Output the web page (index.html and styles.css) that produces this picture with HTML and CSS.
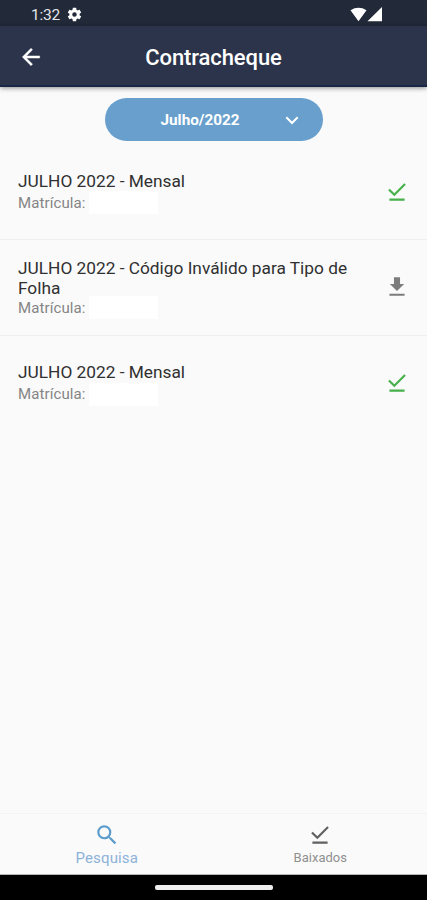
FILE: index.html
```html
<!DOCTYPE html>
<html lang="pt-BR">
<head>
    <meta charset="UTF-8">
    <meta name="viewport" content="width=device-width, initial-scale=1.0">
    <title>Contracheque</title>
    <link rel="stylesheet" href="styles.css">
</head>
<body>
    <div class="status-bar">
        <span class="clock">1:32</span>
        <svg class="gear" viewBox="0 0 24 24"><path fill-rule="evenodd" d="M19.14 12.94c.04-.3.06-.61.06-.94 0-.32-.02-.64-.07-.94l2.03-1.58c.18-.14.23-.41.12-.61l-1.92-3.32c-.12-.22-.37-.29-.59-.22l-2.39.96c-.5-.38-1.03-.7-1.62-.94l-.36-2.54c-.04-.24-.24-.41-.48-.41h-3.84c-.24 0-.43.17-.47.41l-.36 2.54c-.59.24-1.13.57-1.62.94l-2.39-.96c-.22-.08-.47 0-.59.22L2.74 8.87c-.12.21-.08.47.12.61l2.03 1.58c-.05.3-.09.63-.09.94s.02.64.07.94l-2.03 1.58c-.18.14-.23.41-.12.61l1.92 3.32c.12.22.37.29.59.22l2.39-.96c.5.38 1.03.7 1.62.94l.36 2.54c.05.24.24.41.48.41h3.84c.24 0 .44-.17.47-.41l.36-2.54c.59-.24 1.13-.56 1.62-.94l2.39.96c.22.08.47 0 .59-.22l1.92-3.32c.12-.22.07-.47-.12-.61l-2.01-1.58zM12 15.2a3.2 3.2 0 1 1 0-6.4 3.2 3.2 0 0 1 0 6.4z"/></svg>
        <svg class="signals" viewBox="0 0 34 16"><path d="M.5 3.2Q8.5-1.6 16.5 3.2L8.5 14.2zM32 0v14.2H17.5z"/></svg>
    </div>

    <header class="top-bar">
        <svg class="back" viewBox="0 0 24 24"><path d="M20 11H7.83l5.59-5.59L12 4l-8 8 8 8 1.41-1.41L7.83 13H20v-2z"/></svg>
        <h1>Contracheque</h1>
    </header>

    <main>
        <button class="month-button">
            <span>Julho/2022</span>
            <svg viewBox="0 0 14 9"><path d="M1.3 1.3L7 7l5.7-5.7"/></svg>
        </button>

        <div class="list">
            <div class="item">
                <div class="item-text">
                    <h2>JULHO 2022 - Mensal</h2>
                    <p>Matrícula: <span class="hidden-number"></span></p>
                </div>
                <svg class="icon green" viewBox="0 0 24 24"><path d="M20.13 5.41L18.72 4l-9.19 9.19-4.25-4.24-1.41 1.41 5.66 5.66zM5 18h14v2H5z"/></svg>
            </div>
            <div class="item long">
                <div class="item-text">
                    <h2>JULHO 2022 - Código Inválido para Tipo de Folha</h2>
                    <p>Matrícula: <span class="hidden-number"></span></p>
                </div>
                <svg class="icon gray" viewBox="0 0 24 24"><path d="M18.6 9.3h-3.8V3H9.2v6.3H5.4l6.6 6.4zM5 18.2h14V20H5z"/></svg>
            </div>
            <div class="item">
                <div class="item-text">
                    <h2>JULHO 2022 - Mensal</h2>
                    <p>Matrícula: <span class="hidden-number"></span></p>
                </div>
                <svg class="icon green" viewBox="0 0 24 24"><path d="M20.13 5.41L18.72 4l-9.19 9.19-4.25-4.24-1.41 1.41 5.66 5.66zM5 18h14v2H5z"/></svg>
            </div>
        </div>
    </main>

    <nav class="tabs">
        <div class="tab active">
            <svg viewBox="0 0 24 24"><path d="M15.5 14h-.79l-.28-.27A6.47 6.47 0 0 0 16 9.5 6.5 6.5 0 1 0 9.5 16c1.61 0 3.09-.59 4.23-1.57l.27.28v.79l5 4.99L20.49 19l-4.99-5zm-6 0a4.5 4.5 0 1 1 0-9 4.5 4.5 0 0 1 0 9z"/></svg>
            <span>Pesquisa</span>
        </div>
        <div class="tab">
            <svg viewBox="0 0 24 24"><path d="M20.13 5.41L18.72 4l-9.19 9.19-4.25-4.24-1.41 1.41 5.66 5.66zM5 18h14v2H5z"/></svg>
            <span>Baixados</span>
        </div>
    </nav>

    <div class="system-nav">
        <div class="home-line"></div>
    </div>
</body>
</html>
```

FILE: styles.css
```css
* {
    box-sizing: border-box;
}

body {
    margin: 0;
    height: 900px;
    display: flex;
    flex-direction: column;
    background: #fafafa;
    font-family: Roboto, "Liberation Sans", sans-serif;
    overflow: hidden;
}

h1, h2, p {
    margin: 0;
}

svg {
    display: block;
    flex-shrink: 0;
    fill: currentColor;
}

.status-bar {
    height: 26px;
    padding: 3px 43px 0 31px;
    display: flex;
    align-items: center;
    background: #222938;
    color: white;
}

.clock {
    width: 30px;
    font-size: 15.5px;
    letter-spacing: -0.2px;
    line-height: 20px;
    color: #e4e6ea;
}

.gear {
    width: 17px;
    height: 17px;
    margin-left: 5px;
}

.signals {
    width: 34px;
    height: 16px;
    margin-left: auto;
}

.top-bar {
    position: relative;
    height: 61px;
    padding: 2px 0 0 18px;
    display: flex;
    align-items: center;
    background: #2c344b;
    border-bottom: 2px solid #192645;
    box-shadow: 0 1px 5px rgba(0, 0, 0, 0.45);
    color: white;
}

.back {
    width: 26px;
    height: 26px;
    stroke: currentColor;
    stroke-width: 0.4;
}

.top-bar h1 {
    flex: 1;
    padding: 3px 44px 0 0;
    text-align: center;
    font-size: 22px;
    font-weight: 500;
    line-height: 28px;
    letter-spacing: -0.1px;
}

main {
    flex: 1;
    display: flex;
    flex-direction: column;
    align-items: center;
    padding-top: 11px;
}

.month-button {
    width: 218px;
    height: 43px;
    padding: 0 24px 0 56px;
    display: flex;
    align-items: center;
    justify-content: space-between;
    border: none;
    border-radius: 22px;
    background: #689fcd;
    color: white;
    font-family: inherit;
    font-size: 15.3px;
    font-weight: 700;
}

.month-button svg {
    width: 14px;
    height: 9px;
    margin-top: 1px;
    fill: none;
    stroke: currentColor;
    stroke-width: 2.1;
}

.list {
    width: 100%;
    margin-top: 3px;
}

.item {
    height: 96px;
    padding: 0 17px 0 18px;
    display: flex;
    align-items: center;
    justify-content: space-between;
    border-bottom: 1px solid #efefef;
}

.item:last-child {
    height: 94px;
    border-bottom: none;
}

.item-text {
    width: 345px;
}

.item h2 {
    font-size: 17.3px;
    font-weight: 400;
    line-height: 20px;
    color: #303030;
}

.item p {
    display: flex;
    align-items: center;
    height: 20px;
    margin-top: 2px;
    font-size: 15px;
    letter-spacing: 0.1px;
    color: #858585;
}

.item.long p {
    margin-top: 0;
}

.hidden-number {
    width: 69px;
    height: 23px;
    margin-left: 3px;
    background: white;
}

.icon {
    width: 26px;
    height: 26px;
}

.long .icon {
    margin-bottom: 2px;
}

.green {
    color: #46b04a;
}

.gray {
    color: #7c7c7c;
}

.tabs {
    height: 62px;
    display: flex;
    border-top: 1px solid #f3f3f3;
    border-bottom: 1px solid #b5b5b5;
}

.tab {
    flex: 1;
    display: flex;
    flex-direction: column;
    align-items: center;
    padding-top: 8px;
    font-size: 13px;
    line-height: 20px;
    color: #909090;
}

.tab svg {
    width: 26px;
    height: 26px;
    color: #606060;
}

.tab.active {
    font-size: 15px;
    letter-spacing: 0.15px;
    color: #8db2d9;
}

.tab.active svg {
    color: #5c9ccc;
}

.system-nav {
    height: 25px;
    display: flex;
    justify-content: center;
    align-items: center;
    background: black;
}

.home-line {
    width: 118px;
    height: 5px;
    border-radius: 2px;
    background: #eeeeee;
}
```
